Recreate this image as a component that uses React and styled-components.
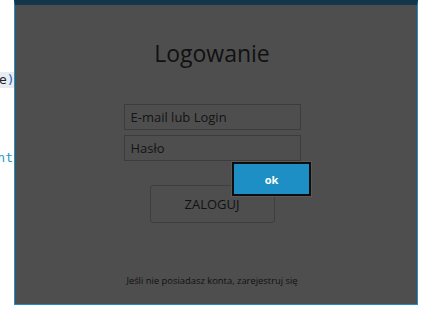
import React from 'react';
import styled, { createGlobalStyle } from 'styled-components';

const Global = createGlobalStyle`
  html, body { margin: 0; padding: 0; background: #fff; }
  body { font-family: "Open Sans", "Noto Sans", sans-serif; }
`;

const Page = styled.div`
  position: relative;
  width: 435px;
  height: 313px;
  overflow: hidden;
`;

const Behind = styled.div`
  width: 14px;
  overflow: hidden;
  display: flex;
  flex-direction: column;
  align-items: flex-end;
  padding-top: 72px;
  font-family: "DejaVu Sans Mono", monospace;
  font-size: 13px;
`;

const CodeLine = styled.div`
  white-space: nowrap;
  height: 16px;
  line-height: 16px;
  margin-bottom: ${p => p.gap || 0}px;
  padding-right: 1px;
  background: ${p => p.hl ? '#e8edf3' : 'transparent'};
  color: ${p => p.color || '#222'};
  width: ${p => p.hl ? '100%' : 'auto'};
  text-align: right;
`;

const Paren = styled.span`
  color: #1c5fb0;
`;

const Dialog = styled.div`
  position: absolute;
  left: 14px;
  top: 0;
  width: 394px;
  height: 299px;
  padding-right: 8px;
  background: #4e4e4e;
  border: 1px solid #1f8fc6;
  border-top: 5px solid #14364b;
  display: flex;
  flex-direction: column;
  align-items: center;
`;

const Title = styled.h1`
  margin: 33px 0 0;
  font-weight: 400;
  font-size: 23px;
  line-height: 30px;
  color: #111;
`;

const Form = styled.div`
  margin-top: 36px;
  display: flex;
  flex-direction: column;
  gap: 5px;
`;

const Field = styled.div`
  width: 169px;
  height: 24px;
  border: 1px solid #3c3c3c;
  padding-left: 6px;
  display: flex;
  align-items: center;
  font-size: 13px;
  color: #141414;
`;

const Submit = styled.button`
  margin-top: 24px;
  width: 125px;
  height: 38px;
  border: 1px solid #3e3e3e;
  border-radius: 3px;
  background: transparent;
  font-family: inherit;
  font-size: 13px;
  color: #111;
  cursor: pointer;
`;

const Footer = styled.div`
  margin-top: auto;
  margin-bottom: 17px;
  font-size: 9.4px;
  color: #111;
`;

const OkButton = styled.button`
  position: absolute;
  left: 217px;
  top: 157px;
  width: 79px;
  height: 34px;
  box-sizing: border-box;
  background: #1e8fc4;
  border: 2px solid #0d0d0d;
  outline: 1px solid #5a5a5a;
  color: #fff;
  font-family: inherit;
  font-weight: 700;
  font-size: 11px;
  cursor: pointer;
`;

export default function App() {
  return (
    <Page>
      <Global />
      <Behind>
        <CodeLine hl gap={62}>e<Paren>)</Paren></CodeLine>
        <CodeLine color="#2a9bbf">ent</CodeLine>
      </Behind>
      <Dialog>
        <Title>Logowanie</Title>
        <Form>
          <Field>E-mail lub Login</Field>
          <Field>Hasło</Field>
        </Form>
        <Submit>ZALOGUJ</Submit>
        <Footer>Jeśli nie posiadasz konta, zarejestruj się</Footer>
        <OkButton>ok</OkButton>
      </Dialog>
    </Page>
  );
}
